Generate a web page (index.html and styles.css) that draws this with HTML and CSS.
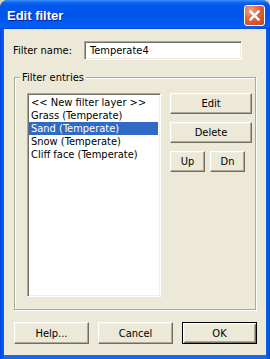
FILE: index.html
```html
<!DOCTYPE html>
<html>
<head>
<meta charset="utf-8">
<link rel="stylesheet" href="styles.css">
</head>
<body>
<div class="window">
  <div class="titlebar">
    <span class="title">Edit filter</span>
    <div class="close">
      <svg width="19" height="19" viewBox="0 0 19 19"><path d="M5.5 5.5 L13.5 13.5 M13.5 5.5 L5.5 13.5" stroke="#fff" stroke-width="2.4" stroke-linecap="square"/></svg>
    </div>
  </div>
  <div class="client">
    <div class="name-row">
      <span class="label">Filter name:</span>
      <div class="edit">Temperate4</div>
    </div>
    <div class="group">
      <span class="group-label">Filter entries</span>
      <div class="list">
        <div class="item">&lt;&lt; New filter layer &gt;&gt;</div>
        <div class="item">Grass (Temperate)</div>
        <div class="item sel">Sand (Temperate)</div>
        <div class="item">Snow (Temperate)</div>
        <div class="item">Cliff face (Temperate)</div>
      </div>
      <div class="side">
        <div class="btn wide">Edit</div>
        <div class="btn wide">Delete</div>
        <div class="pair">
          <div class="btn small">Up</div>
          <div class="btn small">Dn</div>
        </div>
      </div>
    </div>
    <div class="footer">
      <div class="btn foot">Help...</div>
      <div class="btn foot">Cancel</div>
      <div class="btn foot default">OK</div>
    </div>
  </div>
</div>
</body>
</html>
```
FILE: styles.css
```css
html, body {
  margin: 0;
  padding: 0;
  background: #d8d4b8;
}
.window {
  width: 270px;
  height: 359px;
  display: flex;
  flex-direction: column;
  border-radius: 8px 8px 0 0;
  overflow: hidden;
  background: linear-gradient(to right, #0831d9 0, #0058ee 1px, #0058ee 3px, #166aee 4px, #166aee 266px, #0058ee 267px, #0058ee 269px, #0831d9 270px);
  font-family: "DejaVu Sans Condensed", "Liberation Sans", sans-serif;
  font-size: 11px;
  color: #000;
}
.titlebar {
  height: 29px;
  flex: none;
  box-sizing: border-box;
  display: flex;
  justify-content: space-between;
  align-items: flex-start;
  padding: 5px 5px 0 7px;
  background: linear-gradient(to bottom, #3d8cfe 0px, #0a60ec 3px, #0058ee 6px, #0054e6 15px, #005bf2 24px, #0062f8 27px, #0043da 29px);
}
.title {
  font-family: "Liberation Sans", "DejaVu Sans", sans-serif;
  font-weight: bold;
  font-size: 13px;
  line-height: 21px;
  color: #fff;
  text-shadow: 1px 1px 0 #0a1e8a;
}
.close {
  width: 21px;
  height: 21px;
  box-sizing: border-box;
  border: 1px solid #fff;
  border-radius: 3px;
  background: radial-gradient(circle at 30% 25%, #f0a58a 0, #e0623a 45%, #c5431c 100%);
  display: flex;
  align-items: center;
  justify-content: center;
}
.close svg { display: block; }
.client {
  flex: 1;
  margin: 0 4px 4px 4px;
  background: #ece9d8;
  display: flex;
  flex-direction: column;
}
.name-row {
  display: flex;
  align-items: center;
  margin: 12px 0 0 9px;
  height: 19px;
}
.label {
  width: 71px;
}
.edit {
  width: 158px;
  height: 19px;
  box-sizing: border-box;
  background: #fff;
  border: 1px solid;
  border-color: #aca899 #fff #fff #aca899;
  box-shadow: inset 1px 1px 0 #716f64, inset -1px -1px 0 #f1efe2;
  padding: 0 0 0 5px;
  line-height: 17px;
}
.group {
  position: relative;
  margin: 17px 0 0 10px;
  width: 242px;
  height: 233px;
  box-sizing: border-box;
  border: 1px solid #aca899;
  box-shadow: inset 1px 1px 0 #fff, 1px 1px 0 #fff;
  display: flex;
  align-items: flex-start;
  padding: 15px 0 0 12px;
}
.group-label {
  position: absolute;
  top: -7px;
  left: 5px;
  padding: 0 2px;
  line-height: 13px;
  background: #ece9d8;
}
.list {
  width: 134px;
  height: 204px;
  box-sizing: border-box;
  background: #fff;
  border: 1px solid;
  border-color: #aca899 #fff #fff #aca899;
  box-shadow: inset 1px 1px 0 #716f64, inset -1px -1px 0 #f1efe2;
  padding: 2px 2px 0 1px;
}
.item {
  height: 13px;
  line-height: 13px;
  padding-left: 2px;
  white-space: nowrap;
}
.item.sel {
  background: #316ac5;
  color: #fff;
}
.side {
  margin-left: 9px;
  width: 82px;
  display: flex;
  flex-direction: column;
  gap: 8px;
}
.pair {
  display: flex;
  gap: 5px;
}
.btn {
  height: 21px;
  box-sizing: border-box;
  background: #ece9d8;
  border: 1px solid;
  border-color: #fff #716f64 #716f64 #fff;
  box-shadow: inset -1px -1px 0 #aca899, inset 1px 1px 0 #f1efe2;
  display: flex;
  align-items: center;
  justify-content: center;
}
.btn.small { width: 35px; }
.footer {
  display: flex;
  gap: 9px;
  margin: 12px 0 0 10px;
}
.btn.foot {
  width: 75px;
  height: 22px;
}
.btn.default {
  border: 1px solid #000;
  box-shadow: inset 1px 1px 0 #fff, inset -1px -1px 0 #716f64, inset 2px 2px 0 #f1efe2, inset -2px -2px 0 #aca899;
}
```
